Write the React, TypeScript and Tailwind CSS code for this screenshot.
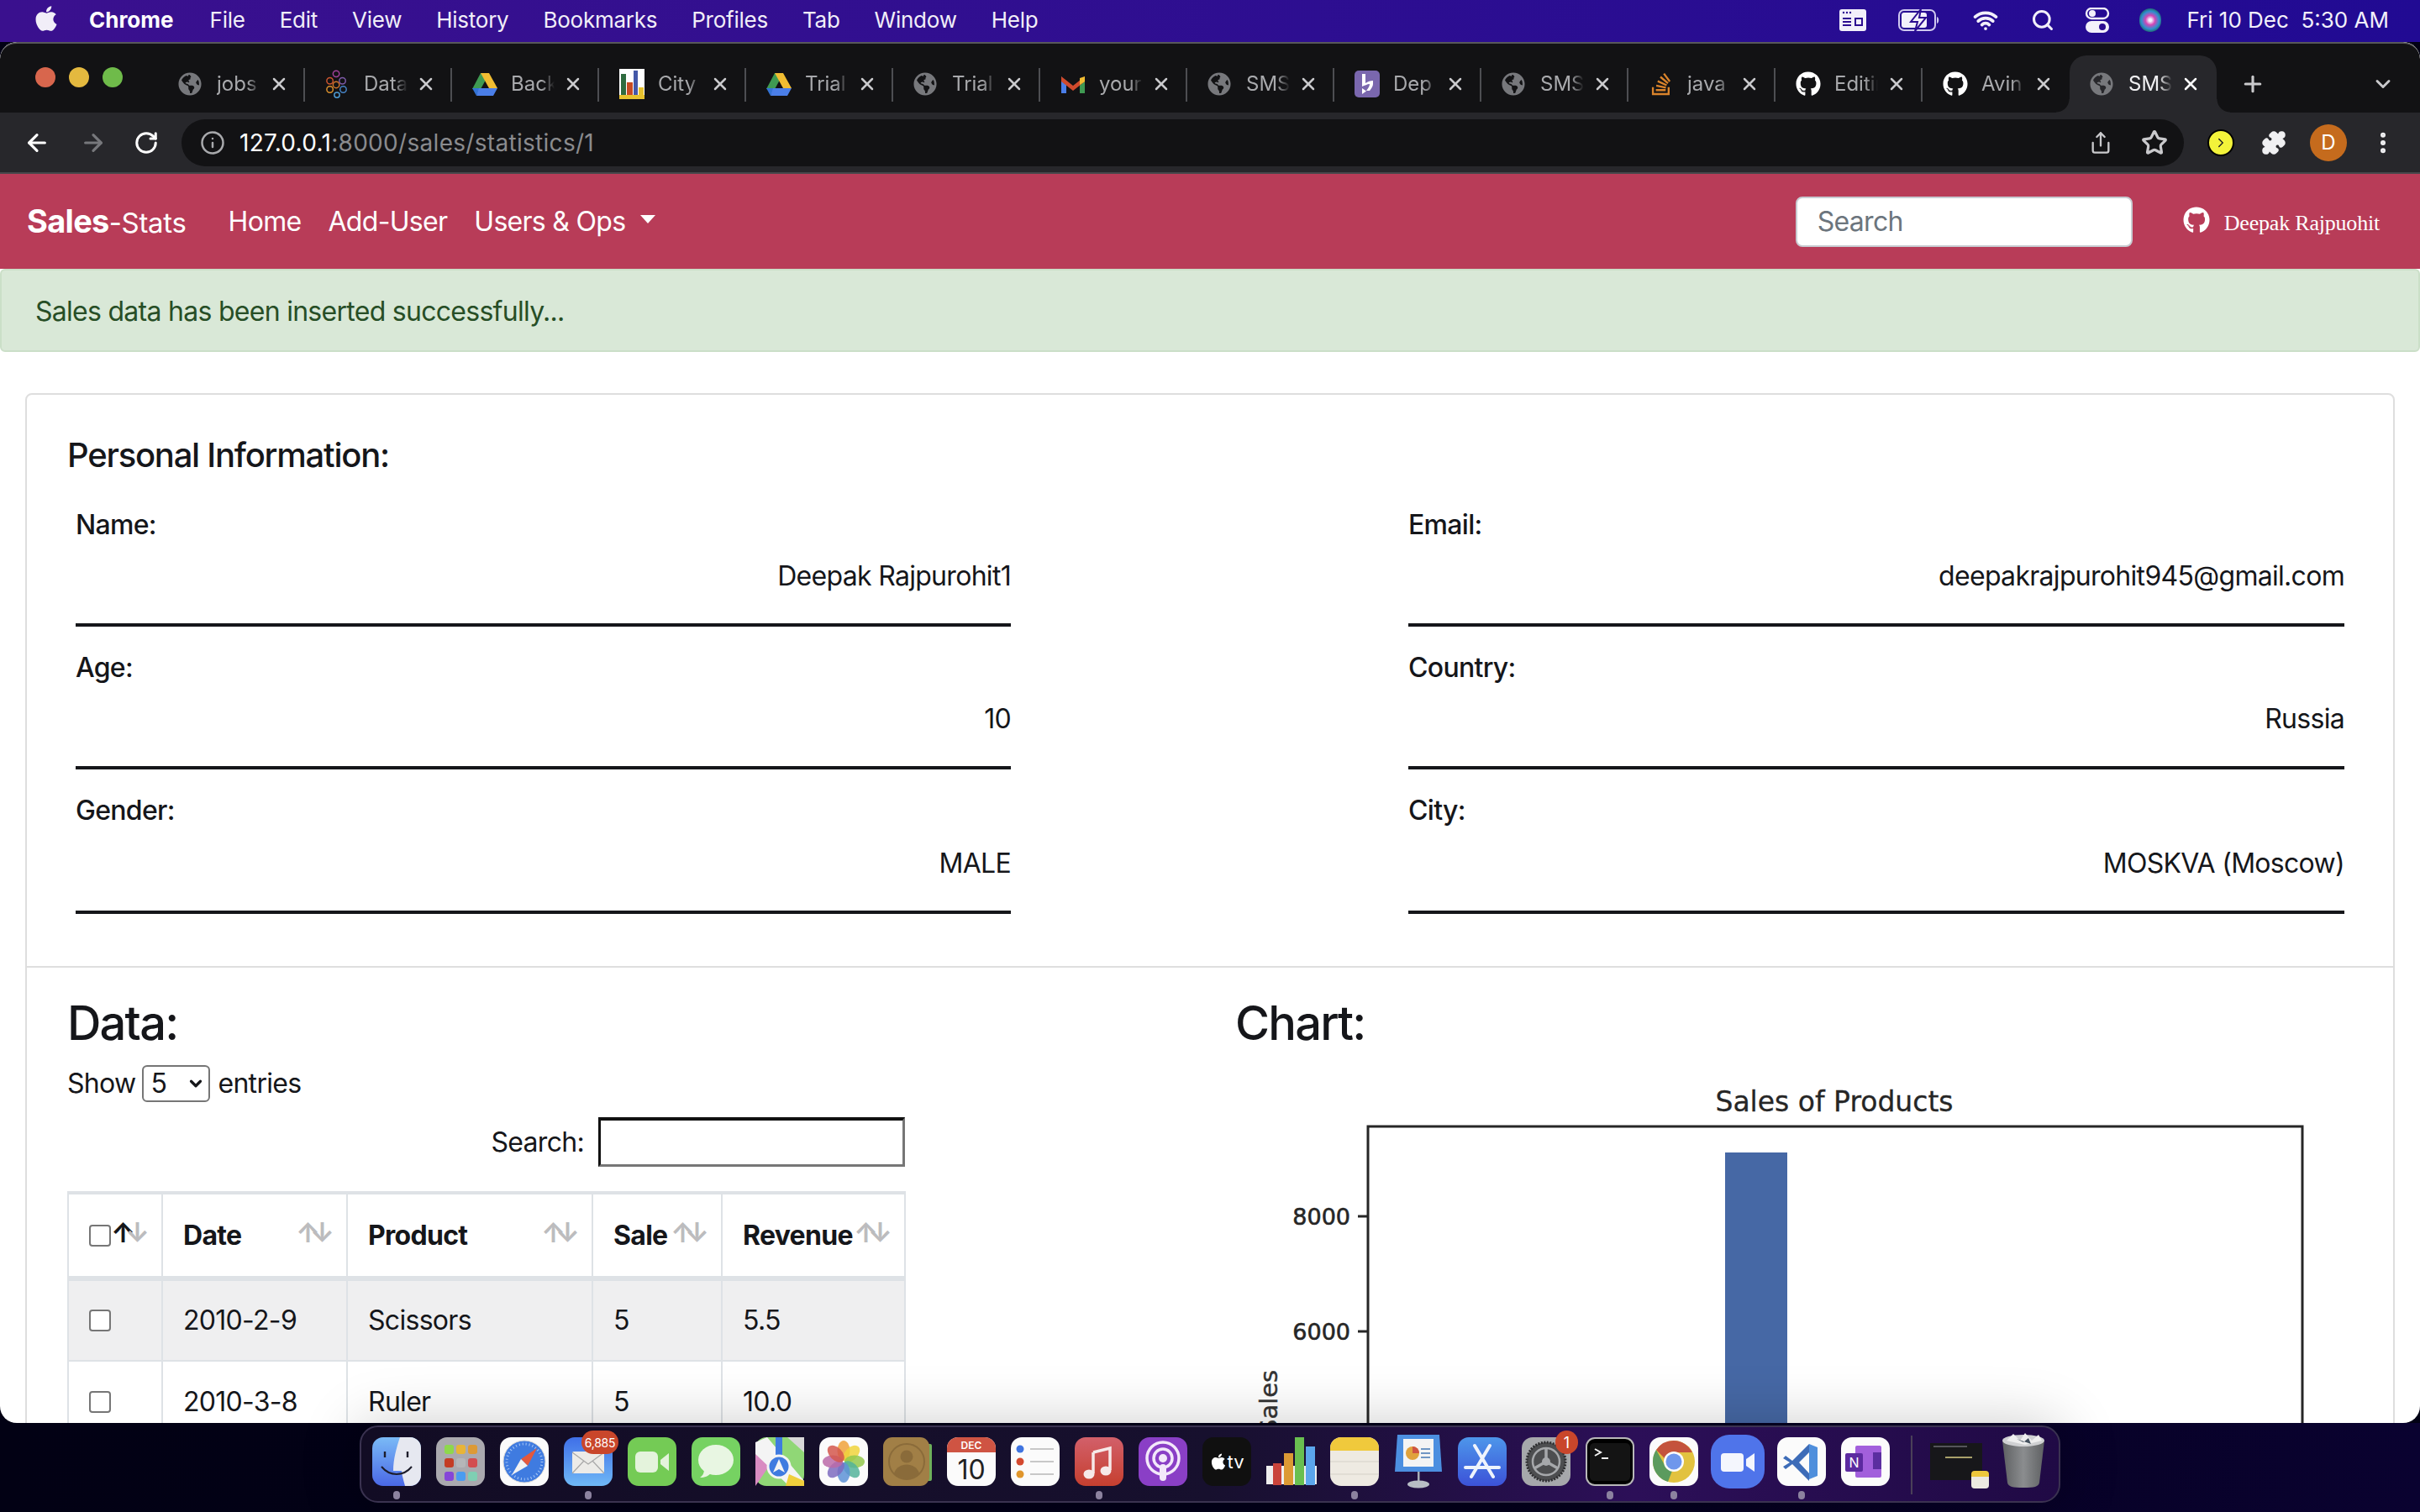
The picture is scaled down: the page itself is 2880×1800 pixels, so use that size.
import type { ReactNode } from "react";
import { ArrowLeft, ArrowRight, ChevronDown, Info, MoreVertical, Plus, Puzzle, RotateCw, Search, Star, Share, X, Wifi, ChevronRight } from "lucide-react";
import { FaApple, FaGithub, FaGlobeAmericas, FaStackOverflow } from "react-icons/fa";

const Globe = () => <FaGlobeAmericas className="w-[28px] h-[28px] text-[#77787c]" />;
const Github = () => <FaGithub className="w-[30px] h-[30px] text-white" />;

const Drive = () => (
  <svg viewBox="0 0 30 28" className="w-[30px] h-[28px]">
    <path d="M10 1h10l-5 10-5 9H0z" fill="#3f9a52" />
    <path d="M10 1h10l10 18H20z" fill="#f1bd32" />
    <path d="M7 19h23l-5 9H5z" fill="#4a7ee8" />
    <path d="M0 19h8l-3 9z" fill="#3373d6" />
  </svg>
);

const Gmail = () => (
  <svg viewBox="0 0 30 26" className="w-[30px] h-[26px]">
    <path d="M1 4v20h6V12z" fill="#4a7ee8" />
    <path d="M29 4v20h-6V12z" fill="#3f9a52" />
    <path d="M1 4l14 11L29 4v6L15 21 1 10z" fill="#cf4a2c" />
    <path d="M23 6l6-2v6l-6 4z" fill="#f1bd32" />
  </svg>
);

const DataLogo = () => (
  <svg viewBox="0 0 30 36" className="w-[28px] h-[34px]" fill="none" strokeWidth="1.6">
    <circle cx="14" cy="5" r="4" stroke="#a1419a" />
    <circle cx="6" cy="14" r="4" stroke="#c9542f" />
    <circle cx="22" cy="14" r="4" stroke="#7d5aa8" />
    <circle cx="14" cy="19" r="4" stroke="#d0752c" />
    <circle cx="6" cy="25" r="4" stroke="#d98f2c" />
    <circle cx="23" cy="25" r="4" stroke="#4582c4" />
    <circle cx="15" cy="32" r="3.4" stroke="#4c9ad1" />
  </svg>
);

const CityLogo = () => (
  <svg viewBox="0 0 30 36" className="w-[30px] h-[36px]">
    <rect width="30" height="36" fill="#fff" />
    <rect x="2" y="6" width="6" height="30" fill="#2f6b3f" />
    <rect x="9" y="16" width="7" height="20" fill="#c74b23" />
    <rect x="17" y="2" width="5" height="34" fill="#4458a8" />
    <rect x="23" y="22" width="6" height="14" fill="#e7c22e" />
    <rect x="0" y="31" width="30" height="5" fill="#e7c22e" />
  </svg>
);

const HerokuLogo = () => (
  <svg viewBox="0 0 30 32" className="w-[30px] h-[32px]">
    <rect width="30" height="32" rx="5" fill="#7a67ae" />
    <path d="M9 4h4v11c3-2 6-3 9-3v4c0 3-2 5-4 8h-4c2-3 4-5 4-8-3 0-6 2-9 3z" fill="#fff" />
    <path d="M9 21l5 3.5L9 28z" fill="#fff" />
  </svg>
);

const tabs: { title: string; icon: ReactNode }[] = [
  { title: "jobs", icon: <Globe /> },
  { title: "Data", icon: <DataLogo /> },
  { title: "Backup", icon: <Drive /> },
  { title: "City", icon: <CityLogo /> },
  { title: "Trial", icon: <Drive /> },
  { title: "Trial", icon: <Globe /> },
  { title: "your", icon: <Gmail /> },
  { title: "SMS", icon: <Globe /> },
  { title: "Dep", icon: <HerokuLogo /> },
  { title: "SMS", icon: <Globe /> },
  { title: "java", icon: <FaStackOverflow className="w-[30px] h-[30px] text-[#d9832b]" /> },
  { title: "Editing", icon: <Github /> },
  { title: "Avin", icon: <Github /> },
  { title: "SMS", icon: <Globe /> },
];

function MenuBar() {
  return (
    <div className="h-[50px] shrink-0 flex items-center bg-gradient-to-r from-[#3a108e] to-[#210a93] text-white text-[26px] pl-[40px] pr-[37px] pb-[3px]">
      <FaApple className="w-[30px] h-[34px] mr-[36px] mb-[4px] text-[#f1eef8]" />
      <span className="font-bold mr-[43px]">Chrome</span>
      <div className="flex gap-[41px] font-normal text-[#f1eef8] tracking-[-0.25px]">
        {["File", "Edit", "View", "History", "Bookmarks", "Profiles", "Tab", "Window", "Help"].map((m) => (
          <span key={m}>{m}</span>
        ))}
      </div>
      <div className="ml-auto flex items-center">
        <svg viewBox="0 0 32 26" className="w-[32px] h-[26px] mr-[38px]">
          <rect width="32" height="26" rx="3" fill="#f2f0fa" />
          <circle cx="5" cy="4" r="1.2" fill="#2c0d90" />
          <circle cx="9" cy="4" r="1.2" fill="#2c0d90" />
          <circle cx="13" cy="4" r="1.2" fill="#2c0d90" />
          <path d="M4 11h10M4 15h10M4 19h10" stroke="#2c0d90" strokeWidth="2" />
          <path d="M19 11h8v8h-8z" stroke="#2c0d90" strokeWidth="2" fill="none" />
        </svg>
        <svg viewBox="0 0 50 26" className="w-[50px] h-[26px] mr-[37px]">
          <rect x="1" y="1" width="43" height="24" rx="6" fill="none" stroke="#cfc8ef" strokeWidth="2" />
          <rect x="4" y="4" width="30" height="18" rx="3" fill="#f2f0fa" />
          <path d="M46 9c3 1 3 7 0 8z" fill="#cfc8ef" />
          <path d="M27 0L15 15h8l-3 11 13-16h-8z" fill="#f2f0fa" stroke="#2c0d90" strokeWidth="2" />
        </svg>
        <Wifi className="w-[34px] h-[30px] mr-[37px] text-[#f2f0fa]" strokeWidth={3} />
        <Search className="w-[28px] h-[28px] mr-[36px] text-[#f2f0fa]" strokeWidth={2.6} />
        <svg viewBox="0 0 30 30" className="w-[30px] h-[30px] mr-[35px]">
          <rect x="2" y="1" width="26" height="12" rx="6" fill="none" stroke="#f2f0fa" strokeWidth="2.4" />
          <circle cx="9" cy="7" r="4" fill="#f2f0fa" />
          <rect x="1" y="16" width="28" height="14" rx="7" fill="#f2f0fa" />
          <circle cx="21" cy="23" r="4" fill="#2c0d90" />
        </svg>
        <span className="w-[26px] h-[28px] rounded-full mr-[30px] bg-[radial-gradient(circle,#f5f0ff_8%,#d247b5_30%,#2f8fd0_55%,#1d5f54_80%,#555_100%)]" />
        <span className="text-[#f2f0fa] whitespace-pre">Fri 10 Dec  5:30 AM</span>
      </div>
    </div>
  );
}

function TabStrip() {
  return (
    <div className="h-[84px] shrink-0 flex items-end bg-[#121214] border-t-2 border-[#58585a] rounded-t-[20px]">
      <div className="w-[188px] h-full shrink-0 flex items-center gap-[16px] pl-[42px] pb-[2px] self-center">
        <span className="w-[24px] h-[24px] rounded-full bg-[#d8664d]" />
        <span className="w-[24px] h-[24px] rounded-full bg-[#e4b93f]" />
        <span className="w-[24px] h-[24px] rounded-full bg-[#6fbb4a]" />
      </div>
      {tabs.map((t, i) => {
        const active = i === tabs.length - 1;
        return (
          <div
            key={i}
            className={`relative w-[175px] h-[68px] shrink-0 flex items-center rounded-t-[20px] ${active ? "bg-[#27272b]" : ""}`}
          >
            <span className="w-[70px] pl-[24px] shrink-0 flex justify-start">{t.icon}</span>
            <span
              className={`w-[52px] overflow-hidden whitespace-nowrap text-[24px] [mask-image:linear-gradient(90deg,#000_70%,transparent)] ${active ? "text-[#f0f0f2]" : "text-[#a8a9ac]"}`}
            >
              {t.title}
            </span>
            <X className={`w-[24px] h-[24px] ml-[10px] shrink-0 ${active ? "text-white" : "text-[#c9c9cc]"}`} strokeWidth={2.5} />
            {!active && i !== tabs.length - 2 && <span className="ml-auto w-[2px] h-[40px] bg-[#4d4e52] mt-[2px]" />}
            {active && (
              <>
                <span className="absolute left-[-16px] bottom-0 w-[16px] h-[16px] bg-[radial-gradient(circle_at_0_0,transparent_15px,#27272b_16px)]" />
                <span className="absolute right-[-16px] bottom-0 w-[16px] h-[16px] bg-[radial-gradient(circle_at_100%_0,transparent_15px,#27272b_16px)]" />
              </>
            )}
          </div>
        );
      })}
      <div className="flex-1 h-[68px] flex items-center">
        <Plus className="ml-[28px] w-[30px] h-[30px] text-[#c9c9cc]" strokeWidth={2.5} />
        <ChevronDown className="ml-auto mr-[30px] w-[28px] h-[28px] text-[#c9c9cc]" strokeWidth={2.5} />
      </div>
    </div>
  );
}

function Toolbar() {
  return (
    <div className="h-[73px] shrink-0 flex items-center bg-[#27272b] border-b-2 border-[#47474b]">
      <div className="w-[216px] shrink-0 flex items-center pl-[28px] text-white">
        <ArrowLeft className="w-[32px] h-[32px]" strokeWidth={2.4} />
        <ArrowRight className="w-[32px] h-[32px] ml-[35px] text-[#77787c]" strokeWidth={2.4} />
        <RotateCw className="w-[30px] h-[30px] ml-[32px]" strokeWidth={2.4} />
      </div>
      <div className="w-[2383px] h-[56px] shrink-0 flex items-center rounded-full bg-[#121214] pl-[22px] pr-[19px]">
        <Info className="w-[30px] h-[30px] text-[#a8a9ac]" strokeWidth={2} />
        <span className="ml-[17px] text-[28px] text-[#8a8b8e] tracking-[0.3px]">
          <span className="text-white">127.0.0.1</span>:8000/sales/statistics/1
        </span>
        <Share className="ml-auto w-[28px] h-[34px] text-[#c9c9cc]" strokeWidth={2} />
        <Star className="ml-[34px] w-[32px] h-[32px] text-[#c9c9cc]" strokeWidth={2.4} />
      </div>
      <div className="flex items-center pl-[28px]">
        <span className="w-[32px] h-[32px] rounded-full bg-[#f3f33a] border-2 border-black flex items-center justify-center">
          <ChevronRight className="w-[18px] h-[18px] text-[#222]" strokeWidth={2} />
        </span>
        <Puzzle className="ml-[32px] w-[30px] h-[30px] text-[#f0f0f2] fill-[#f0f0f2]" />
        <span className="ml-[28px] w-[44px] h-[44px] rounded-full bg-[#c56b1d] text-white text-[24px] flex items-center justify-center">D</span>
        <MoreVertical className="ml-[27px] w-[32px] h-[32px] text-[#f0f0f2]" strokeWidth={2.5} />
      </div>
    </div>
  );
}

function NavBar() {
  return (
    <nav className="h-[113px] shrink-0 flex items-center bg-[#b83c58] text-white pl-[32px] tracking-[-0.7px]">
      <span className="text-[38px] font-bold">
        Sales<span className="text-[33px] font-normal tracking-[-0.3px]">-Stats</span>
      </span>
      <div className="flex items-center gap-[32px] ml-[50px] text-[32px]">
        <span>Home</span>
        <span>Add-User</span>
        <span className="flex items-center">
          Users &amp; Ops
          <span className="ml-[18px] mb-[6px] w-0 h-0 border-x-[9px] border-x-transparent border-t-[10px] border-t-white" />
        </span>
      </div>
      <input
        placeholder="Search"
        className="ml-auto w-[401px] h-[60px] rounded-[8px] bg-white border-2 border-[#c8ccd2] px-[24px] text-[32px] placeholder:text-[#6c757d] outline-none"
      />
      <div className="flex items-center ml-[60px] mr-[48px]">
        <FaGithub className="w-[32px] h-[32px] mb-[4px]" />
        <span className="ml-[17px] mt-[3px] text-[26px] tracking-[-0.2px] font-['Liberation_Serif',serif]">Deepak Rajpuohit</span>
      </div>
    </nav>
  );
}

const infoRows = [
  [
    ["Name:", "Deepak Rajpurohit1"],
    ["Age:", "10"],
    ["Gender:", "MALE"],
  ],
  [
    ["Email:", "deepakrajpurohit945@gmail.com"],
    ["Country:", "Russia"],
    ["City:", "MOSKVA (Moscow)"],
  ],
];

function PersonalInfo() {
  return (
    <div className="pt-[42px] px-[48px] pb-[62px] border-b-2 border-[#dedede]">
      <h4 className="text-[40px] leading-[60px] font-medium tracking-[-1.25px]">Personal Information:</h4>
      <div className="grid grid-cols-[1113px_1114px] gap-x-[473px] px-[10px] mt-[29px]">
        {infoRows.map((col, c) => (
          <div key={c} className="flex flex-col gap-[25px]">
            {col.map(([label, value], r) => (
              <div key={label}>
                <div className="text-[32px] leading-[48px] font-medium">{label}</div>
                <div className={`text-[32px] leading-[48px] text-right pb-[32px] border-b-4 border-[#15161a] ${r === 2 ? "mt-[15px]" : "mt-[13px]"}`}>
                  {value}
                </div>
              </div>
            ))}
          </div>
        ))}
      </div>
    </div>
  );
}

function SortArrows({ first }: { first?: boolean }) {
  return (
    <span className={`absolute top-[30px] right-[26px] text-[32px] font-bold leading-none tracking-[-12px] ${first ? "text-[#15161a]" : "text-[#bcbcbe]"}`}>
      ↑<span className="text-[#bcbcbe]">↓</span>
    </span>
  );
}

const headers = [
  { label: "Date", w: "w-[220px]" },
  { label: "Product", w: "w-[292px]" },
  { label: "Sale", w: "w-[154px]" },
  { label: "Revenue", w: "w-[218px]" },
];

const rows = [
  ["2010-2-9", "Scissors", "5", "5.5"],
  ["2010-3-8", "Ruler", "5", "10.0"],
];

function Checkbox() {
  return <span className="block w-[26px] h-[26px] rounded-[4px] border-2 border-[#767676] bg-white" />;
}

function DataTable() {
  return (
    <table className="w-[997px] mt-[29px] table-fixed border-collapse text-[32px]">
      <thead>
        <tr className="h-[102px] border-t-4 border-[#dee2e6]">
          <th className="relative w-[112px] border-x-2 border-[#dee2e6] pl-[24px] text-left">
            <Checkbox />
            <SortArrows first />
          </th>
          {headers.map((h) => (
            <th key={h.label} className={`relative ${h.w} border-x-2 border-[#dee2e6] pl-[24px] text-left font-bold`}>
              {h.label}
              <SortArrows />
            </th>
          ))}
        </tr>
      </thead>
      <tbody className="border-t-[6px] border-[#dee2e6]">
        {rows.map((row, i) => (
          <tr key={row[0]} className={`h-[98px] border-b-2 border-[#dee2e6] ${i === 0 ? "bg-[#efeff0]" : "bg-white"}`}>
            <td className="border-x-2 border-[#dee2e6] pl-[24px]">
              <Checkbox />
            </td>
            {row.map((cell) => (
              <td key={cell} className="border-x-2 border-[#dee2e6] pl-[24px] text-[#15161a]">
                {cell}
              </td>
            ))}
          </tr>
        ))}
      </tbody>
    </table>
  );
}

function SalesChart() {
  const sans = "DejaVu Sans, sans-serif";
  return (
    <svg viewBox="1471 1252 1300 460" className="w-[1300px] h-[460px] block tracking-normal">
      <text x="2184" y="1323" textAnchor="middle" fontSize="33" fontFamily={sans} fill="#262626" stroke="#262626" strokeWidth="0.3">Sales of Products</text>
      <rect x="1629" y="1341" width="1112" height="500" fill="#fff" stroke="#262626" strokeWidth="3" />
      <rect x="2054" y="1372" width="74" height="400" fill="#4668a5" />
      <path d="M1617 1448h12M1617 1585h12" stroke="#262626" strokeWidth="3" />
      <text x="1608" y="1458" textAnchor="end" fontSize="27" fontFamily={sans} fill="#262626" stroke="#262626" strokeWidth="0.6">8000</text>
      <text x="1608" y="1595" textAnchor="end" fontSize="27" fontFamily={sans} fill="#262626" stroke="#262626" strokeWidth="0.6">6000</text>
      <text x="1521" y="1708" fontSize="29" fontFamily={sans} fill="#333" stroke="#333" strokeWidth="0.4" transform="rotate(-90 1521 1708)">Sales</text>
    </svg>
  );
}

function DataSection() {
  return (
    <div className="grid grid-cols-[1390px_1fr] pl-[48px] pt-[32px]">
      <div>
        <h2 className="text-[56px] leading-[68px] font-medium tracking-[-1.8px]">Data:</h2>
        <div className="flex items-center h-[44px] mt-[16px] text-[32px]">
          Show
          <span className="ml-[8px] w-[81px] h-[44px] rounded-[6px] border-2 border-[#767676] flex items-center pl-[8px]">
            5
            <ChevronDown className="ml-auto mr-[4px] w-[22px] h-[22px]" strokeWidth={3.5} />
          </span>
          <span className="ml-[9px]">entries</span>
        </div>
        <div className="w-[997px] flex items-center justify-end mt-[18px] text-[32px]">
          Search:
          <input className="ml-[17px] w-[365px] h-[59px] border-[3px] border-t-[4px] border-t-[#111] border-l-[#111] border-r-[#767676] border-b-[#767676] outline-none" />
        </div>
        <DataTable />
      </div>
      <div>
        <h2 className="text-[56px] leading-[68px] font-medium tracking-[-1.8px]">Chart:</h2>
        <SalesChart />
      </div>
    </div>
  );
}

const Dot = ({ on }: { on?: boolean }) => (
  <span className={`block w-[8px] h-[10px] mx-auto mt-[6px] rounded-full ${on ? "bg-[#8c829f]" : "bg-transparent"}`} />
);

const tile = "w-[58px] h-[58px] block";

const dockIcons: { key: string; on?: boolean; node: ReactNode; badge?: string }[] = [
  {
    key: "finder",
    on: true,
    node: (
      <svg viewBox="0 0 58 58" className={tile}>
        <defs>
          <linearGradient id="fb" x1="0" y1="0" x2="0" y2="1">
            <stop offset="0" stopColor="#7abaf6" />
            <stop offset="1" stopColor="#4a68e6" />
          </linearGradient>
        </defs>
        <rect width="58" height="58" rx="13" fill="url(#fb)" />
        <path d="M33 0h12a13 13 0 0113 13v32a13 13 0 01-13 13h-6c-2-8-4-14-4-18H25c0-14 4-28 8-40z" fill="#e6e8f0" />
        <path d="M11 35c10 12 26 12 36 0" stroke="#1d1d2b" strokeWidth="2" fill="none" />
        <path d="M15 17v7M42 17v7" stroke="#1d1d2b" strokeWidth="2.4" />
      </svg>
    ),
  },
  {
    key: "launchpad",
    node: (
      <svg viewBox="0 0 58 58" className={tile}>
        <rect width="58" height="58" rx="13" fill="#aaa9ae" />
        {[
          ["#8ed84c", 10, 9], ["#e8b437", 24, 9], ["#dd9a35", 38, 9],
          ["#c43c24", 10, 25], ["#b5b6b8", 24, 25], ["#d34d50", 38, 25],
          ["#8546d8", 10, 41], ["#4a9cf0", 24, 41], ["#7fcfb3", 38, 41],
        ].map(([c, x, y]) => (
          <rect key={String(c)} x={Number(x)} y={Number(y)} width="11" height="11" rx="3" fill={String(c)} />
        ))}
      </svg>
    ),
  },
  {
    key: "safari",
    node: (
      <svg viewBox="0 0 58 58" className={tile}>
        <rect width="58" height="58" rx="13" fill="#fbfbfb" />
        <circle cx="29" cy="29" r="25" fill="#3f7be0" stroke="#d7d7d7" />
        <circle cx="29" cy="29" r="21" fill="none" stroke="#a9c8f5" strokeWidth="3" strokeDasharray="1 3" />
        <path d="M44 13L33 34 25 26z" fill="#e4583d" />
        <path d="M14 45l11-19 8 8z" fill="#f2f2f2" />
      </svg>
    ),
  },
  {
    key: "mail",
    on: true,
    badge: "6,885",
    node: (
      <svg viewBox="0 0 58 58" className={tile}>
        <defs>
          <linearGradient id="mb" x1="0" y1="0" x2="0" y2="1">
            <stop offset="0" stopColor="#3f6fe8" />
            <stop offset="1" stopColor="#6fb8f6" />
          </linearGradient>
        </defs>
        <rect width="58" height="58" rx="13" fill="url(#mb)" />
        <rect x="10" y="17" width="38" height="26" rx="2" fill="#ecebe8" />
        <path d="M10 18l19 14 19-14M10 43l14-15M48 43L34 28" stroke="#a8a8a8" strokeWidth="1.2" fill="none" />
      </svg>
    ),
  },
  {
    key: "facetime",
    node: (
      <svg viewBox="0 0 58 58" className={tile}>
        <rect width="58" height="58" rx="13" fill="#74cb55" />
        <rect x="9" y="17" width="27" height="25" rx="6" fill="#e4f3dc" />
        <path d="M39 27l10-8v21l-10-8z" fill="#e4f3dc" />
      </svg>
    ),
  },
  {
    key: "messages",
    node: (
      <svg viewBox="0 0 58 58" className={tile}>
        <rect width="58" height="58" rx="13" fill="#76d262" />
        <ellipse cx="29" cy="27" rx="21" ry="18" fill="#e8f6e2" />
        <path d="M15 38c0 5-2 8-5 10 6 0 10-2 13-5z" fill="#e8f6e2" />
      </svg>
    ),
  },
  {
    key: "maps",
    node: (
      <svg viewBox="0 0 58 58" className={tile}>
        <rect width="58" height="58" rx="13" fill="#90d776" />
        <path d="M0 20l18 12L0 58z" fill="#d98cc2" />
        <path d="M38 0h20v18z" fill="#d8d8d8" />
        <path d="M14 0l44 52v6H40L0 20V6z" fill="#f4f4f4" />
        <path d="M24 0h8v26h-8z" fill="#3f7be0" />
        <path d="M40 44l18 8v6H36z" fill="#f0cf3c" />
        <circle cx="28" cy="35" r="13" fill="#3f7be0" stroke="#f4f4f4" strokeWidth="3" />
        <path d="M28 26l7 16-7-4-7 4z" fill="#f4f4f4" />
      </svg>
    ),
  },
  {
    key: "photos",
    node: (
      <svg viewBox="0 0 58 58" className={tile}>
        <rect width="58" height="58" rx="13" fill="#fbfbfb" />
        {[
          ["#f0a23c", 0], ["#f0d33c", 45], ["#93c84c", 90], ["#53b39a", 135],
          ["#5d92d6", 180], ["#7d6bc0", 225], ["#bb6aa8", 270], ["#d4574c", 315],
        ].map(([c, a]) => (
          <ellipse key={String(a)} cx="29" cy="16" rx="7.5" ry="12" fill={String(c)} opacity="0.85" transform={`rotate(${a} 29 29)`} />
        ))}
      </svg>
    ),
  },
  {
    key: "contacts",
    node: (
      <svg viewBox="0 0 58 58" className={tile}>
        <rect x="52" y="8" width="6" height="44" rx="2" fill="#6fb05a" />
        <rect width="55" height="58" rx="11" fill="#a17f46" />
        <circle cx="28" cy="29" r="21" fill="none" stroke="#8a6b3a" strokeWidth="2" />
        <circle cx="28" cy="23" r="7.5" fill="#8a6b3a" />
        <path d="M13 43c4-14 26-14 30 0a21 21 0 01-30 0z" fill="#8a6b3a" />
      </svg>
    ),
  },
  {
    key: "calendar",
    node: (
      <svg viewBox="0 0 58 58" className={tile}>
        <rect width="58" height="58" rx="13" fill="#fbfbfb" />
        <path d="M0 18V13A13 13 0 0113 0h32a13 13 0 0113 13v5z" fill="#cf5443" />
        <text x="29" y="14" textAnchor="middle" fontSize="12" fontWeight="600" fill="#fff" fontFamily="Inter, sans-serif">DEC</text>
        <text x="29" y="50" textAnchor="middle" fontSize="32" fill="#222" fontFamily="Inter, sans-serif">10</text>
      </svg>
    ),
  },
  {
    key: "reminders",
    node: (
      <svg viewBox="0 0 58 58" className={tile}>
        <rect width="58" height="58" rx="13" fill="#fbfbfb" />
        <circle cx="11" cy="14" r="4.5" fill="#3f74e0" />
        <circle cx="11" cy="29" r="4.5" fill="#d4492f" />
        <circle cx="11" cy="44" r="4.5" fill="#e0962c" />
        <path d="M23 14h28M23 29h28M23 44h28" stroke="#b8b8b8" strokeWidth="1.5" />
      </svg>
    ),
  },
  {
    key: "music",
    on: true,
    node: (
      <svg viewBox="0 0 58 58" className={tile}>
        <defs>
          <linearGradient id="mu" x1="0" y1="0" x2="0" y2="1">
            <stop offset="0" stopColor="#d2606a" />
            <stop offset="1" stopColor="#c63f2f" />
          </linearGradient>
        </defs>
        <rect width="58" height="58" rx="13" fill="url(#mu)" />
        <path d="M22 18l20-5v26" fill="none" stroke="#f6e9e9" strokeWidth="3.5" />
        <path d="M22 18v25" stroke="#f6e9e9" strokeWidth="3.5" />
        <ellipse cx="17" cy="44" rx="6.5" ry="5.5" fill="#f6e9e9" />
        <ellipse cx="37" cy="40" rx="6.5" ry="5.5" fill="#f6e9e9" />
      </svg>
    ),
  },
  {
    key: "podcasts",
    node: (
      <svg viewBox="0 0 58 58" className={tile}>
        <rect width="58" height="58" rx="13" fill="#8a3fc6" />
        <circle cx="29" cy="25" r="19" fill="none" stroke="#f3e8fa" strokeWidth="3.5" />
        <circle cx="29" cy="25" r="11" fill="none" stroke="#f3e8fa" strokeWidth="3.5" />
        <circle cx="29" cy="25" r="5" fill="#f3e8fa" />
        <rect x="25" y="32" width="8" height="20" rx="4" fill="#f3e8fa" />
      </svg>
    ),
  },
  {
    key: "tv",
    node: (
      <div className="w-[58px] h-[58px] rounded-[13px] bg-[#101010] flex items-center justify-center gap-[1px] text-white text-[22px]">
        <FaApple className="w-[20px] h-[22px]" />
        tv
      </div>
    ),
  },
  {
    key: "numbers",
    node: (
      <svg viewBox="0 0 62 62" className="w-[62px] h-[62px] -ml-[2px] -mt-[2px] block">
        <path d="M2 36h60v22H2z" fill="#eeeeee" />
        <rect x="10" y="33" width="10" height="26" fill="#c9443b" />
        <rect x="23" y="21" width="11" height="38" fill="#dc9a34" />
        <rect x="36" y="2" width="11" height="57" fill="#69bf50" />
        <rect x="49" y="13" width="11" height="46" fill="#5ba6ec" />
      </svg>
    ),
  },
  {
    key: "notes",
    on: true,
    node: (
      <svg viewBox="0 0 58 58" className={tile}>
        <rect width="58" height="58" rx="13" fill="#eeeae2" />
        <path d="M0 16V13A13 13 0 0113 0h32a13 13 0 0113 13v3z" fill="#f0c93c" />
        <path d="M0 29h58M0 44h58" stroke="#d5d1c8" strokeWidth="1" />
      </svg>
    ),
  },
  {
    key: "keynote",
    node: (
      <svg viewBox="0 0 58 64" className="w-[58px] h-[64px] -mt-[3px] block">
        <path d="M4 0h50l3 44H1z" fill="#4c8fe0" />
        <rect x="11" y="5" width="36" height="33" fill="#f4f4f4" />
        <circle cx="22" cy="22" r="8" fill="#e0a23c" />
        <path d="M22 22V14a8 8 0 018 8z" fill="#cf5443" />
        <path d="M32 17h11M32 22h11M32 27h11" stroke="#6f96c4" strokeWidth="2" />
        <rect x="28" y="44" width="2.5" height="14" fill="#a8aeb5" />
        <ellipse cx="29" cy="59" rx="13" ry="4.5" fill="#b8bec5" />
      </svg>
    ),
  },
  {
    key: "appstore",
    node: (
      <svg viewBox="0 0 58 58" className={tile}>
        <defs>
          <linearGradient id="as" x1="0" y1="0" x2="0" y2="1">
            <stop offset="0" stopColor="#4d96ea" />
            <stop offset="1" stopColor="#3c52d8" />
          </linearGradient>
        </defs>
        <rect width="58" height="58" rx="13" fill="url(#as)" />
        <path d="M20 10l22 37M38 10L16 47M9 36h40" stroke="#eef3fc" strokeWidth="4" strokeLinecap="round" fill="none" />
      </svg>
    ),
  },
  {
    key: "settings",
    badge: "1",
    node: (
      <svg viewBox="0 0 58 58" className={tile}>
        <rect width="58" height="58" rx="13" fill="#a6a8ab" />
        <circle cx="29" cy="29" r="23" fill="#4d4e50" stroke="#2e2e30" strokeWidth="3" strokeDasharray="2 1.5" />
        <circle cx="29" cy="29" r="16" fill="none" stroke="#a6a8ab" strokeWidth="2.5" />
        <path d="M29 29V13M29 29L15 37M29 29l14 8" stroke="#a6a8ab" strokeWidth="3.5" />
        <circle cx="29" cy="29" r="5" fill="#a6a8ab" />
      </svg>
    ),
  },
  {
    key: "terminal",
    on: true,
    node: (
      <svg viewBox="0 0 58 58" className={tile}>
        <rect width="58" height="58" rx="11" fill="#b8b8b8" />
        <rect x="2" y="2" width="54" height="54" rx="9" fill="#000" />
        <rect x="5" y="7" width="48" height="45" rx="5" fill="#141414" />
        <path d="M11 14l7 4-7 4M19 25h8" stroke="#f4f4f4" strokeWidth="2" fill="none" />
      </svg>
    ),
  },
  {
    key: "chrome",
    on: true,
    node: (
      <svg viewBox="0 0 58 58" className={tile}>
        <rect width="58" height="58" rx="13" fill="#fbfbfb" />
        <circle cx="29" cy="29" r="25" fill="#e2c23f" />
        <path d="M29 4a25 25 0 0122 14H29a11 11 0 00-11 7L8 15A25 25 0 0129 4z" fill="#c4533c" />
        <path d="M4 29a25 25 0 014-14l10 18 9 7-5 13A25 25 0 014 29z" fill="#5b9b5e" />
        <circle cx="29" cy="29" r="12" fill="#fbfbfb" />
        <circle cx="29" cy="29" r="9.5" fill="#6f97ec" />
      </svg>
    ),
  },
  {
    key: "zoom",
    node: (
      <svg viewBox="0 0 64 64" className="w-[64px] h-[64px] -mx-[3px] -mt-[3px] block">
        <rect width="64" height="64" rx="22" fill="#4f74ea" />
        <rect x="12" y="22" width="27" height="22" rx="4" fill="#f4f6fd" />
        <path d="M42 29l10-7v22l-10-7z" fill="#f4f6fd" />
      </svg>
    ),
  },
  {
    key: "vscode",
    on: true,
    node: (
      <svg viewBox="0 0 58 58" className={tile}>
        <rect width="58" height="58" rx="13" fill="#fbfbfb" />
        <path d="M38 8l10 4v34l-10 4z" fill="#4f8fdc" />
        <path d="M38 8L18 28l-8-6-3 3 8 5-8 5 3 3 8-6 20 20v-9L26 30l12-12z" fill="#3d6cb8" />
      </svg>
    ),
  },
  {
    key: "onenote",
    node: (
      <svg viewBox="0 0 58 58" className={tile}>
        <rect width="58" height="58" rx="13" fill="#fbfbfb" />
        <rect x="17" y="10" width="31" height="38" rx="2" fill="#a25fdc" />
        <rect x="38" y="18" width="10" height="20" fill="#5b2ea0" />
        <rect x="5" y="19" width="21" height="22" rx="2" fill="#5c2aa0" />
        <text x="15.5" y="36" textAnchor="middle" fontSize="16" fill="#fff" fontFamily="Inter, sans-serif">N</text>
      </svg>
    ),
  },
];

function Dock() {
  return (
    <div className="relative z-10 flex-1 bg-[linear-gradient(90deg,#020114_0%,#03011a_60%,#0a0230_100%)] pl-[428px] pt-[3px]">
      <div className="w-[2024px] h-[92px] flex items-start rounded-[22px] border-2 border-[#3a3250] bg-[linear-gradient(90deg,#120c24_0%,#17102e_50%,#2c0f58_75%,#200a45_100%)] pl-[13px] pt-[12px] shadow-[0_0_70px_rgba(0,0,0,0.22)]">
        <div className="flex gap-[18px]">
          {dockIcons.map((d) => (
            <div key={d.key} className="relative w-[58px]">
              {d.node}
              <Dot on={d.on} />
              {d.badge && (
                <span
                  className={`absolute -top-[8px] h-[28px] rounded-full bg-[#c9462b] text-white flex items-center justify-center ${d.badge === "1" ? "-right-[9px] w-[27px] text-[18px]" : "-right-[7px] w-[44px] text-[14px] tracking-[-0.3px]"}`}
                >
                  {d.badge}
                </span>
              )}
            </div>
          ))}
        </div>
        <span className="ml-[25px] w-[2px] h-[70px] -mt-[2px] bg-[#4a4058]" />
        <div className="relative ml-[21px] w-[62px] h-[44px] mt-[7px] bg-[#17171a]">
          <span className="absolute left-[4px] top-[3px] w-[40px] h-[2px] bg-[#55555a]" />
          <span className="absolute left-[18px] top-[16px] w-[32px] h-[2px] bg-[#a8a06a]" />
          <span className="absolute right-[-8px] bottom-[-10px] w-[21px] h-[21px] rounded-[4px] bg-[#ece9e1] border-t-[7px] border-[#eec83c]" />
        </div>
        <svg viewBox="0 0 52 66" className="ml-[23px] w-[52px] h-[66px] -mt-[6px]">
          <defs>
            <linearGradient id="tr" x1="0" y1="0" x2="1" y2="0">
              <stop offset="0" stopColor="#5e6062" />
              <stop offset="0.5" stopColor="#8b8d8f" />
              <stop offset="1" stopColor="#5e6062" />
            </linearGradient>
          </defs>
          <path d="M1 10h50l-6 50c-1 5-6 6-19 6S8 65 7 60z" fill="url(#tr)" />
          <ellipse cx="26" cy="10" rx="25" ry="7" fill="#cfd0d2" />
          <path d="M6 10l8-8 8 8 6-9 8 9 8-7 4 7-20 5z" fill="#eeeeee" />
          <path d="M18 8l8 4 6-5 3 7z" fill="#44505e" />
        </svg>
      </div>
    </div>
  );
}

export default function App() {
  return (
    <div className="w-[2880px] h-[1800px] flex flex-col overflow-hidden bg-[#020114] font-[Inter,sans-serif] text-[#15161a]">
      <MenuBar />
      <div className="h-[1644px] shrink-0 flex flex-col overflow-hidden rounded-[20px] bg-white">
        <TabStrip />
        <Toolbar />
        <NavBar />
        <div className="h-[99px] shrink-0 flex items-center rounded-[6px] bg-[#d9e8d7] border-2 border-[#cbdfc8] pl-[40px] pt-[2px] text-[32px] tracking-[-0.72px] text-[#274e26]">
          Sales data has been inserted successfully...
        </div>
        <div className="mx-[30px] mt-[49px] h-[1300px] rounded-t-[8px] border-2 border-[#dedede] tracking-[-0.7px]">
          <PersonalInfo />
          <DataSection />
        </div>
      </div>
      <Dock />
    </div>
  );
}
